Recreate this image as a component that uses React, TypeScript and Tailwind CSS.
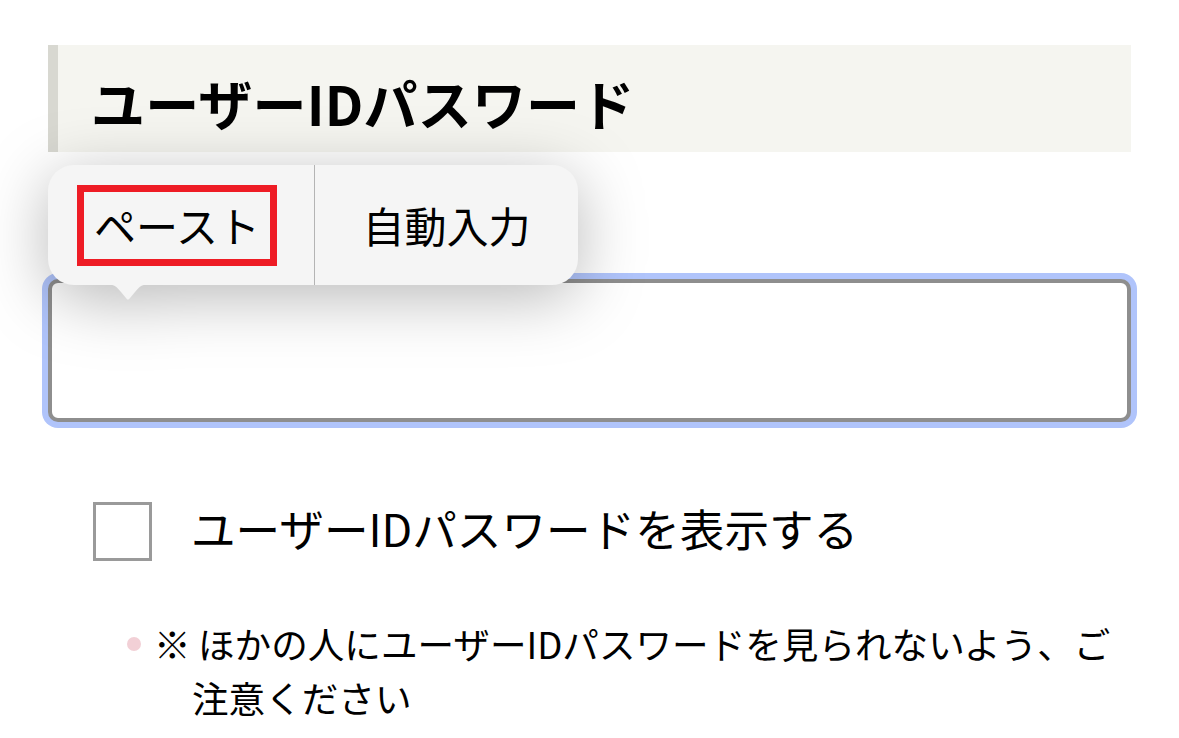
import React from "react";

const jp = { fontFamily: '"Noto Sans CJK JP", "Noto Sans", sans-serif' };

export default function App() {
  return (
    <div className="relative min-h-[738px] w-[1179px] bg-white text-black overflow-hidden" style={jp}>
      <div className="px-[48px] pt-[45px]">
        <div className="flex h-[107px] items-center border-l-[10px] border-[#d8d8d1] bg-[#f5f5f0] pl-[33px] pt-[8px]">
          <h1 className="text-[54px] font-bold leading-none tracking-[0.2px]">ユーザーIDパスワード</h1>
        </div>

        <div className="mt-[127px] h-[143px] rounded-[10px] border-4 border-[#8e8e8e] bg-white ring-[6px] ring-[#b0c4fb]" />

        <div className="mt-[80px] flex items-center pl-[45px]">
          <div className="h-[59px] w-[59px] border-[3px] border-[#9a9a9a] bg-white" />
          <span className="ml-[39px] mb-[6px] text-[44.6px] leading-none">ユーザーIDパスワードを表示する</span>
        </div>

        <div className="mt-[56px] flex pl-[79px] text-[36.6px] leading-[54px]">
          <span className="mt-[20px] h-[14px] w-[14px] shrink-0 rounded-full bg-[#f2d0d6]" />
          <span className="ml-[13px] w-[38px] shrink-0">※</span>
          <p className="w-[940px] indent-[6px]">ほかの人にユーザーIDパスワードを見られないよう、ご注意ください</p>
        </div>
      </div>

      <div className="absolute left-[48px] top-[165px] drop-shadow-[0_12px_32px_rgba(0,0,0,0.28)]">
        <div className="flex h-[120px] w-[530px] rounded-[26px] bg-[#f5f5f5]">
          <div className="flex w-[266px] items-center justify-center pr-[8px]">
            <div className="flex h-[81px] w-[200px] items-center justify-center border-[7px] border-[#ee1c25] text-[42px] leading-none">
              ペースト
            </div>
          </div>
          <div className="w-px bg-[#b4b4b4]" />
          <div className="flex flex-1 items-center justify-center text-[42px] leading-none">
            自動入力
          </div>
        </div>
        <svg className="absolute left-[56px] top-[119px]" width="48" height="22" viewBox="0 0 48 22">
          <path d="M0 0 C10 0 12 2 17 8 L22 14 C23.5 16 24.5 16 26 14 L31 8 C36 2 38 0 48 0 Z" fill="#f5f5f5" />
        </svg>
      </div>
    </div>
  );
}
